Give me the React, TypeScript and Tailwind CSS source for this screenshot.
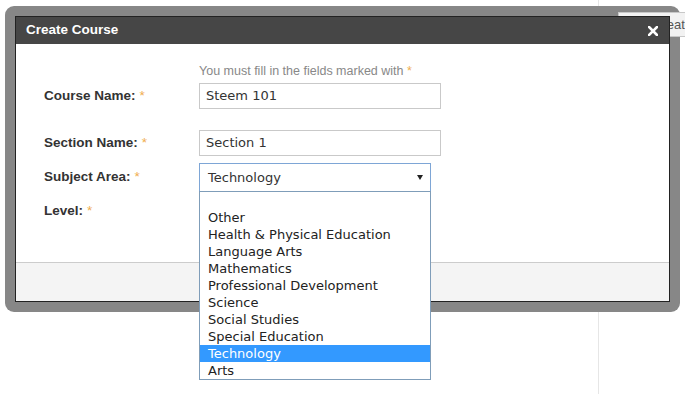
const subjects = [
  "",
  "Other",
  "Health & Physical Education",
  "Language Arts",
  "Mathematics",
  "Professional Development",
  "Science",
  "Social Studies",
  "Special Education",
  "Technology",
  "Arts",
];

function Req() {
  return <span className="ml-[4px] font-normal text-[#f0ad4e]">*</span>;
}

export default function App() {
  return (
    <div className="relative h-[394px] w-[685px] overflow-hidden bg-white font-['Liberation_Sans',Arial,sans-serif]">
      {/* page behind the modal */}
      <div className="flex h-full">
        <div className="w-[598px] shrink-0"></div>
        <div className="min-w-0 flex-1 border-l border-[#e6e6e6]">
          <button className="relative z-10 ml-[19px] mt-[12px] h-[25px] w-[80px] border border-[#c8c8c8] bg-[#f2f2f2] pl-[34px] text-left text-[13px] text-[#555]">
            Create
          </button>
        </div>
      </div>

      {/* modal */}
      <div className="absolute left-[5px] top-[6px] w-[675px] rounded-[9px] bg-[#878787] p-[10px]">
        <div className="relative z-20 flex h-[286px] flex-col border border-[#222] bg-white">
          <div className="flex h-[27px] items-center justify-between bg-[#464646] pl-[10px] pr-[11px]">
            <span className="text-[13.5px] font-bold text-white">Create Course</span>
            <svg width="10" height="10" viewBox="0 0 10 10">
              <path d="M1 1 L9 9 M9 1 L1 9" stroke="#fff" strokeWidth="2.6" strokeLinecap="square" />
            </svg>
          </div>

          <div className="h-[218px] pl-[28px] pt-[19px]">
            <div className="grid grid-cols-[155px_242px]">
              <div></div>
              <div className="h-[16px] text-[12.5px] leading-[16px] text-[#888]">
                You must fill in the fields marked with <span className="text-[#f0ad4e]">*</span>
              </div>

              <label className="mt-[4px] flex items-center text-[13.5px] font-bold text-[#333]">
                Course Name:<Req />
              </label>
              <div className="mt-[4px] flex h-[26px] items-center border border-[#c9c9c9] pl-[6px] font-['DejaVu_Sans',sans-serif] text-[13px] text-[#333]">
                Steem 101
              </div>

              <label className="mt-[21px] flex items-center text-[13.5px] font-bold text-[#333]">
                Section Name:<Req />
              </label>
              <div className="mt-[21px] flex h-[26px] items-center border border-[#c9c9c9] pl-[6px] font-['DejaVu_Sans',sans-serif] text-[13px] text-[#333]">
                Section 1
              </div>

              <label className="mt-[7px] flex items-center text-[13.5px] font-bold text-[#333]">
                Subject Area:<Req />
              </label>
              <div className="relative mt-[7px] w-[232px]">
                <div className="flex h-[29px] items-center justify-between border border-[#7ea6d6] pl-[8px] pr-[7px] font-['DejaVu_Sans',sans-serif] text-[13px] text-[#333]">
                  Technology
                  <svg width="6" height="5" viewBox="0 0 6 5">
                    <path d="M0 0 L6 0 L3 5 Z" fill="#222" />
                  </svg>
                </div>
                <ul className="absolute left-0 top-[28px] z-30 w-[232px] border border-[#7f9db9] bg-white font-['DejaVu_Sans',sans-serif] text-[13px] text-[#222]">
                  {subjects.map((s, i) => (
                    <li
                      key={i}
                      className={
                        s === "Technology"
                          ? "h-[17px] bg-[#3399ff] pl-[8px] leading-[17px] text-white"
                          : "h-[17px] pl-[8px] leading-[17px]"
                      }
                    >
                      {s}
                    </li>
                  ))}
                </ul>
              </div>

              <label className="mt-[6px] flex h-[26px] items-center text-[13.5px] font-bold text-[#333]">
                Level:<Req />
              </label>
              <div className="mt-[6px] h-[26px]"></div>
            </div>
          </div>

          <div className="flex-1 border-t border-[#cccccc] bg-[#f4f4f4]"></div>
        </div>
      </div>
    </div>
  );
}
